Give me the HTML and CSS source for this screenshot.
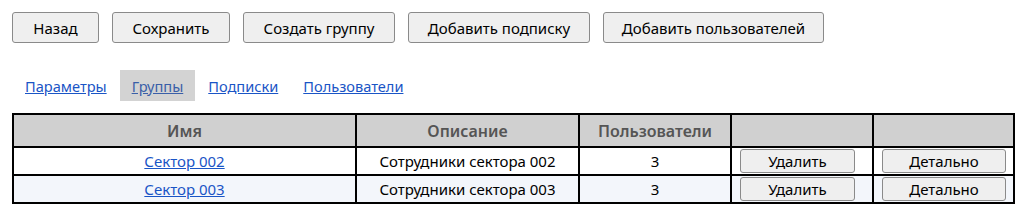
FILE: index.html
```html
<!DOCTYPE html>
<html lang="ru">
<head>
<meta charset="utf-8">
<link rel="stylesheet" href="styles.css">
</head>
<body>
<div class="toolbar">
  <button class="btn b1">Назад</button>
  <button class="btn b2">Сохранить</button>
  <button class="btn b3">Создать группу</button>
  <button class="btn b4">Добавить подписку</button>
  <button class="btn b5">Добавить пользователей</button>
</div>
<div class="tabs">
  <a class="tab" href="#">Параметры</a>
  <a class="tab active" href="#">Группы</a>
  <a class="tab" href="#">Подписки</a>
  <a class="tab" href="#">Пользователи</a>
</div>
<table class="grid">
  <colgroup>
    <col class="c1"><col class="c2"><col class="c3"><col class="c4"><col class="c5">
  </colgroup>
  <thead>
    <tr><th>Имя</th><th>Описание</th><th>Пользователи</th><th></th><th></th></tr>
  </thead>
  <tbody>
    <tr>
      <td><a href="#">Сектор 002</a></td>
      <td>Сотрудники сектора 002</td>
      <td>3</td>
      <td class="act"><button class="rbtn del">Удалить</button></td>
      <td class="act"><button class="rbtn det">Детально</button></td>
    </tr>
    <tr class="alt">
      <td><a href="#">Сектор 003</a></td>
      <td>Сотрудники сектора 003</td>
      <td>3</td>
      <td class="act"><button class="rbtn del">Удалить</button></td>
      <td class="act"><button class="rbtn det">Детально</button></td>
    </tr>
  </tbody>
</table>
</body>
</html>
```

FILE: styles.css
```css
html, body {
  margin: 0;
  padding: 0;
  background: #fff;
}
body {
  padding: 12px;
  font-family: "Noto Sans", "Open Sans", sans-serif;
  font-size: 15px;
  color: #000;
}
.toolbar {
  display: flex;
  gap: 13px;
  height: 31px;
}
.btn {
  font-family: inherit;
  font-size: 15px;
  color: #000;
  background: #efefef;
  border: 1px solid #8a8a8a;
  border-radius: 3px;
  height: 31px;
  padding: 0;
}
.b1 { width: 87px; }
.b2 { width: 118px; }
.b3 { width: 152px; }
.b4 { width: 182px; }
.b5 { width: 221px; }
.tabs {
  display: flex;
  margin-top: 27px;
  margin-left: 1px;
  height: 31px;
}
.tab {
  display: flex;
  align-items: center;
  padding: 0 12px;
  color: #1a55c6;
  text-decoration: underline;
  font-size: 14.6px;
  margin-right: 1px;
}
.tab.active {
  background: #d3d3d3;
  color: #3a5fa8;
}
.grid {
  margin-top: 12px;
  width: 1001px;
  table-layout: fixed;
  border-collapse: separate;
  border-spacing: 0;
  border: 1px solid #000;
}
.c1 { width: 343px; }
.c2 { width: 223px; }
.c3 { width: 152px; }
.c4 { width: 142px; }
.c5 { width: 141px; }
.grid th, .grid td {
  border: 1px solid #000;
  text-align: center;
  padding: 0;
  font-size: 15px;
}
.grid th {
  background: #d0d0d0;
  color: #555;
  font-weight: 600;
  height: 31px;
  font-size: 16px;
}
.grid td {
  height: 26px;
  vertical-align: middle;
}
.grid a {
  color: #1a55c6;
}
.grid tr.alt td {
  background: #f3f6fb;
}
.grid td.act {
  text-align: left;
  padding-left: 8px;
}
.rbtn {
  font-family: inherit;
  font-size: 15px;
  color: #000;
  background: #efefef;
  border: 1px solid #8a8a8a;
  border-radius: 3px;
  height: 24px;
  padding: 0;
  display: block;
}
.del { width: 115px; }
.det { width: 124px; }
```
